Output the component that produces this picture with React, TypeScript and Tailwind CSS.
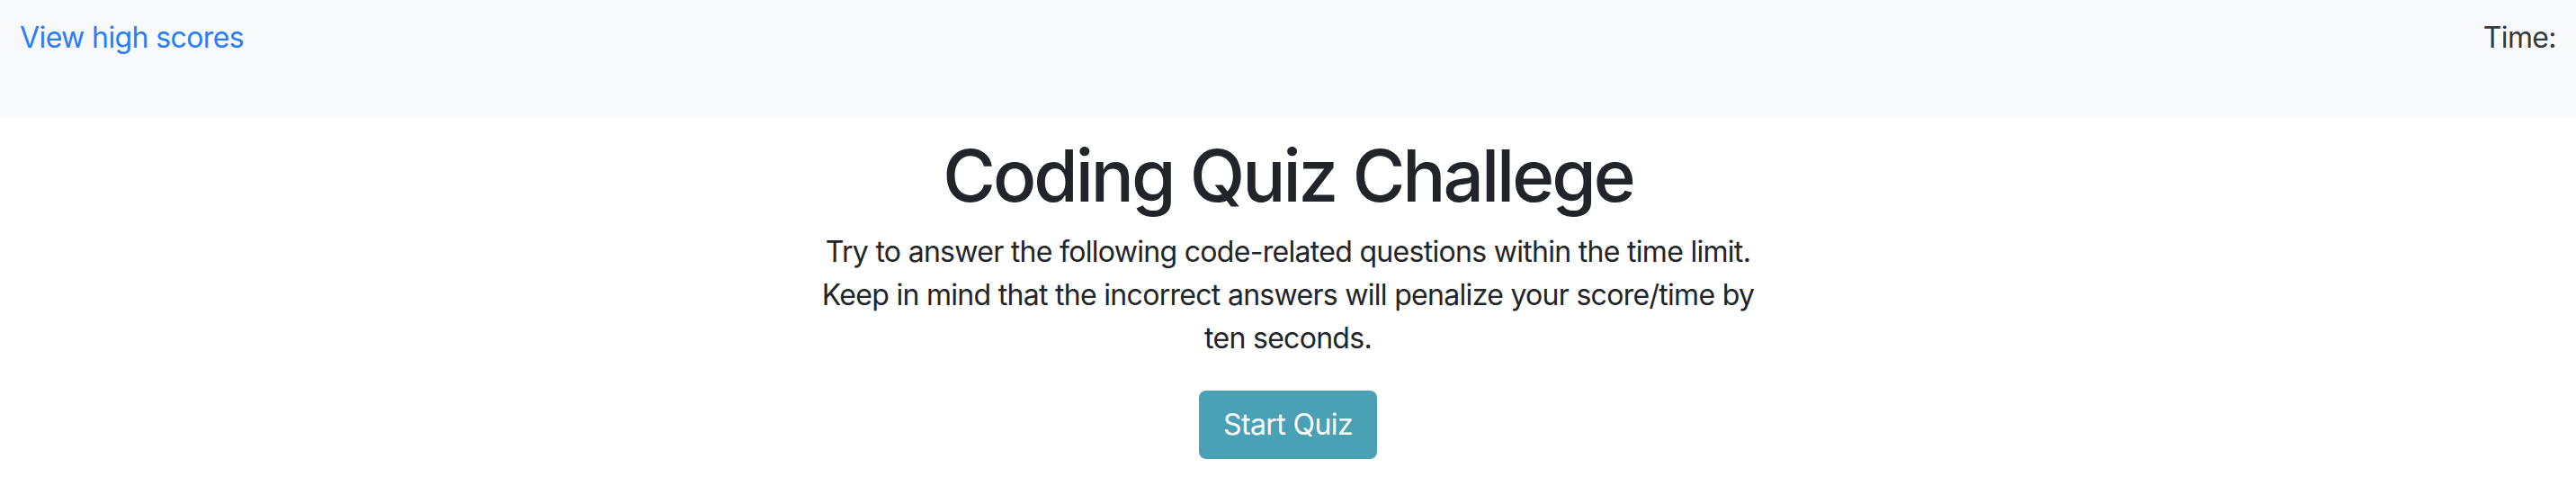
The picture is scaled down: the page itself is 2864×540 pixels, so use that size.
export default function App() {
  return (
    <div className="min-h-[540px] bg-white text-[#212529] font-['Inter','Liberation_Sans',sans-serif]">
      <header className="flex h-[130px] items-start justify-between bg-[#f8f9fa] px-[22px] pt-[18px] text-[32px] leading-[48px] tracking-[-0.6px]">
        <a href="#" className="text-[#2a7df6]">
          View high scores
        </a>
        <span className="text-[#343a40]">Time:</span>
      </header>

      <main className="flex flex-col items-center">
        <h1 className="mt-[17px] text-[80px] leading-[96px] font-medium tracking-[-3px]">
          Coding Quiz Challege
        </h1>
        <p className="mt-[13px] max-w-[1050px] text-center text-[32px] leading-[48px] tracking-[-0.7px]">
          Try to answer the following code-related questions within the time
          limit. Keep in mind that the incorrect answers will penalize your
          score/time by ten seconds.
        </p>
        <button className="mt-[34px] h-[76px] w-[198px] rounded-[8px] bg-[#4aa0b5] text-[32px] leading-[48px] tracking-[-0.6px] text-white">
          Start Quiz
        </button>
      </main>
    </div>
  );
}
